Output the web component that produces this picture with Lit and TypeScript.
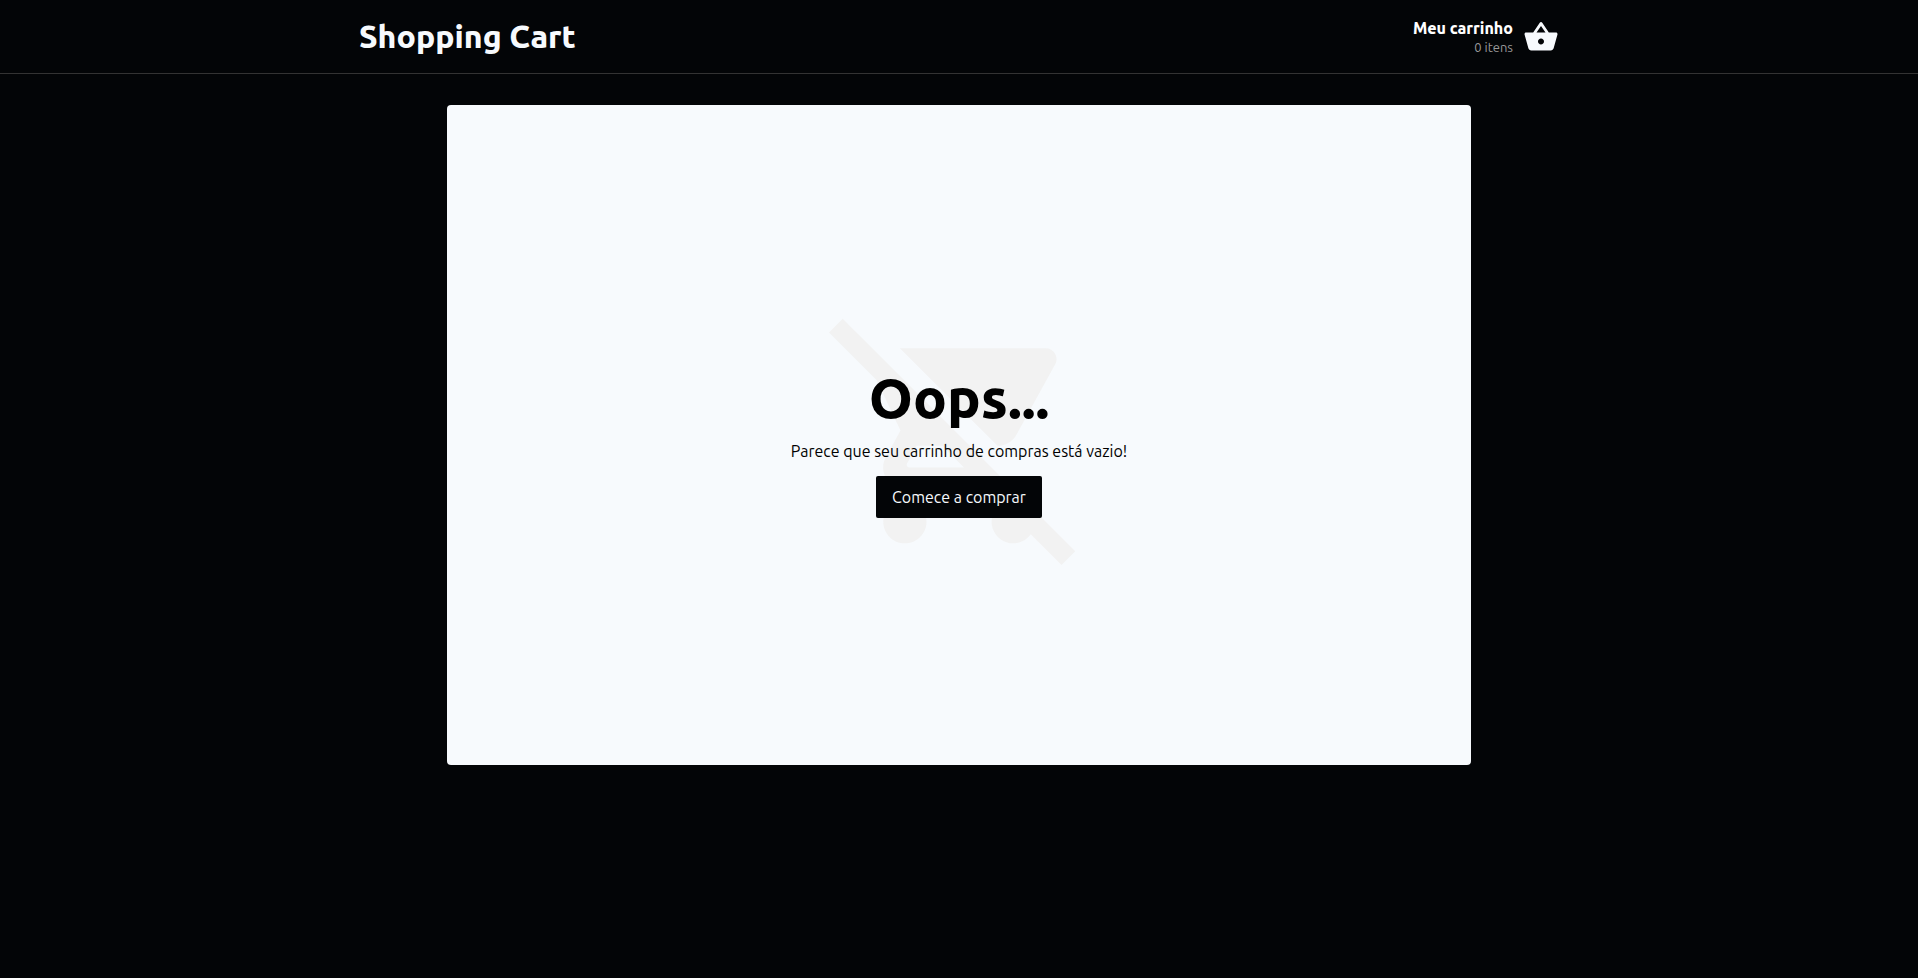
import { LitElement, html, css } from "lit";
import { customElement, property } from "lit/decorators.js";

const fontStack = css`"Ubuntu", "Noto Sans", sans-serif`;

@customElement("cart-header")
export class CartHeader extends LitElement {
  @property({ type: Number }) count = 0;

  static styles = css`
    :host {
      display: block;
      border-bottom: 1px solid #333;
    }
    .bar {
      display: flex;
      align-items: center;
      justify-content: space-between;
      box-sizing: border-box;
      max-width: 1200px;
      min-height: 73px;
      margin: 0 auto;
    }
    a {
      color: inherit;
      text-decoration: none;
    }
    .title {
      margin: 0;
      font: 800 32px/39px ${fontStack};
      color: #f7fafd;
    }
    .cart {
      display: flex;
      align-items: center;
      gap: 10px;
    }
    .info {
      display: flex;
      flex-direction: column;
      align-items: flex-end;
    }
    .label {
      font: 800 16px/20px ${fontStack};
      color: #fff;
    }
    .count {
      font: 400 13px/18px ${fontStack};
      color: #999;
    }
    .basket {
      display: block;
      width: 36px;
      height: 36px;
      fill: #f7fafd;
    }
  `;

  render() {
    return html`
      <header class="bar">
        <h1 class="title"><a href="#">Shopping Cart</a></h1>
        <a class="cart" href="#cart">
          <span class="info">
            <span class="label">Meu carrinho</span>
            <span class="count">${this.count} itens</span>
          </span>
          <svg class="basket" viewBox="0 0 24 24" aria-hidden="true">
            <path d="M17.21 9l-4.38-6.56a.993.993 0 0 0-.83-.42c-.32 0-.64.14-.83.43L6.79 9H2c-.55 0-1 .45-1 1 0 .09.01.18.04.27l2.54 9.27c.23.84 1 1.46 1.92 1.46h13c.92 0 1.69-.62 1.93-1.46l2.54-9.27L23 10c0-.55-.45-1-1-1h-4.79zM9 9l3-4.4L15 9H9zm3 8c-1.1 0-2-.9-2-2s.9-2 2-2 2 .9 2 2-.9 2-2 2z"/>
          </svg>
        </a>
      </header>
    `;
  }
}

@customElement("empty-cart")
export class EmptyCart extends LitElement {
  static styles = css`
    :host {
      display: block;
    }
    .card {
      display: grid;
      place-items: center;
      box-sizing: border-box;
      max-width: 1024px;
      min-height: 660px;
      margin: 0 auto;
      padding: 32px;
      border-radius: 4px;
      background: #f7fafd;
      color: #000;
    }
    .art,
    .message {
      grid-area: 1 / 1;
    }
    .art {
      width: 260px;
      height: 260px;
      fill: #f2f2f2;
    }
    .message {
      display: flex;
      flex-direction: column;
      align-items: center;
      padding-top: 14px;
      text-align: center;
    }
    .heading {
      margin: 0;
      font: 800 56px/64px ${fontStack};
    }
    .text {
      margin: 8px 0 12px;
      font: 400 16px/26px ${fontStack};
    }
    .start {
      padding: 11px 16px;
      border: 0;
      border-radius: 2px;
      background: #030507;
      color: #f7fafd;
      font: 400 16px/20px ${fontStack};
      cursor: pointer;
    }
  `;

  render() {
    return html`
      <section class="card">
        <svg class="art" viewBox="0 0 24 24" aria-hidden="true">
          <path d="M22.73 22.73L2.77 2.77 2 2l-.73-.73L0 2.54l4.39 4.39 2.21 4.66-1.35 2.45c-.16.28-.25.61-.25.96 0 1.1.9 2 2 2h7.46l1.38 1.38A1.997 1.997 0 0 0 17 22c.67 0 1.26-.33 1.62-.84L21.46 24l1.27-1.27zM7.42 15c-.14 0-.25-.11-.25-.25l.03-.12.9-1.63h2.36l2 2H7.42zm8.13-2c.75 0 1.41-.41 1.75-1.03l3.58-6.49A.996.996 0 0 0 20.01 4H6.54l9.01 9zM7 18c-1.1 0-1.99.9-1.99 2S5.9 22 7 22s2-.9 2-2-.9-2-2-2z"/>
        </svg>
        <div class="message">
          <h2 class="heading">Oops...</h2>
          <p class="text">Parece que seu carrinho de compras está vazio!</p>
          <button class="start" type="button">Comece a comprar</button>
        </div>
      </section>
    `;
  }
}

@customElement("app-root")
export class AppRoot extends LitElement {
  static styles = css`
    :host {
      display: block;
      min-height: 100vh;
      background: #030507;
    }
    .main {
      padding: 31px 0;
    }
  `;

  render() {
    return html`
      <cart-header .count=${0}></cart-header>
      <main class="main">
        <empty-cart></empty-cart>
      </main>
    `;
  }
}
